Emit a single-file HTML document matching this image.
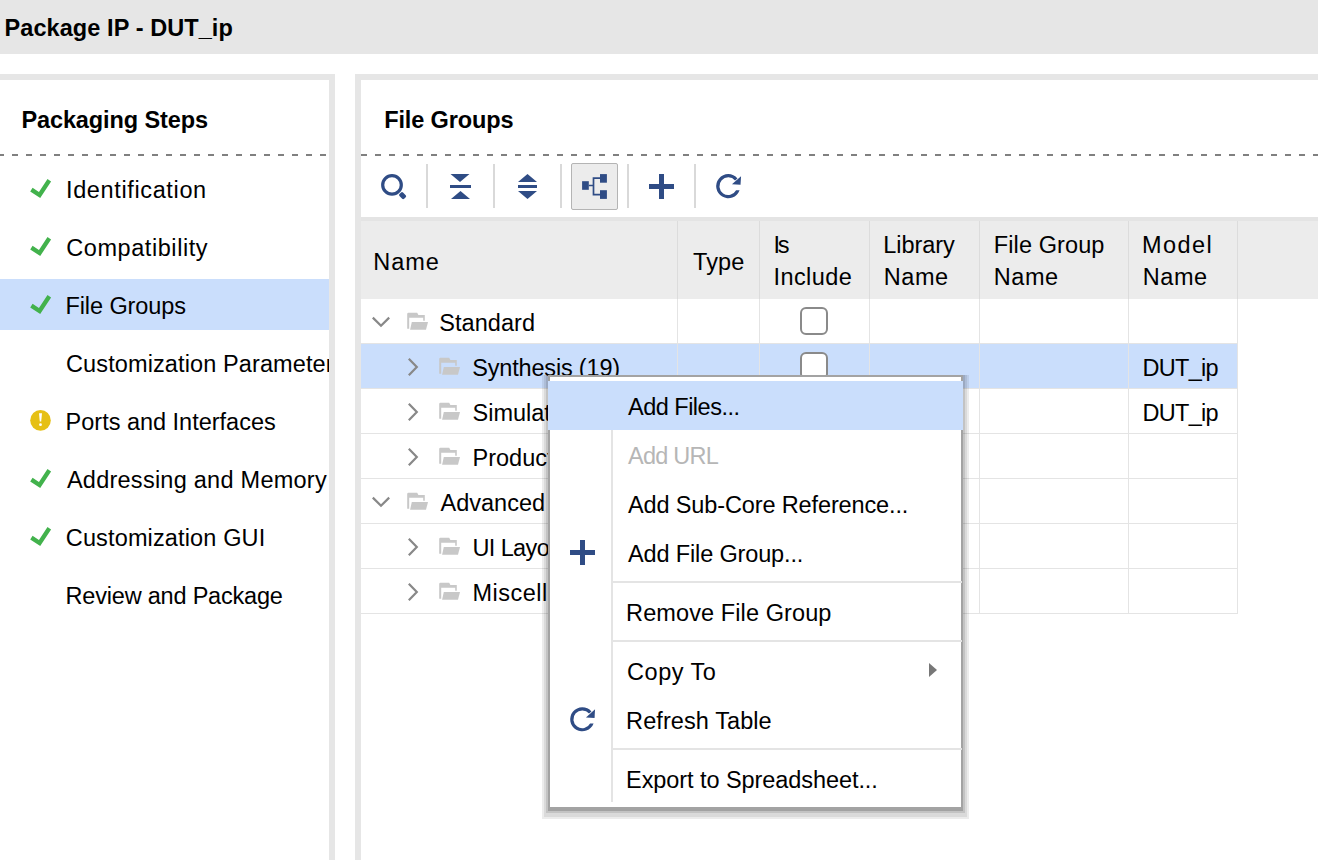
<!DOCTYPE html>
<html><head><meta charset="utf-8">
<style>
*{margin:0;padding:0;box-sizing:border-box}
html,body{width:1318px;height:860px;overflow:hidden;background:#fff;font-family:"Liberation Sans",sans-serif;color:#000}
.a{position:absolute}
.t{position:absolute;white-space:nowrap;font-size:23.5px;line-height:1}
svg{position:absolute;overflow:visible}
</style></head><body>
<div class="a" style="left:0;top:0;width:1318px;height:54px;background:#e6e6e6"></div>
<div class="t" style="left:4.5px;top:17.31px;font-weight:bold;letter-spacing:0.083px">Package IP - DUT_ip</div>
<div class="a" style="left:-10px;top:74px;width:345px;height:900px;border:6px solid #e6e6e6"></div>
<div class="a" style="left:355px;top:74px;width:1100px;height:900px;border:6px solid #e6e6e6;border-right:none"></div>
<div class="t" style="left:21.4px;top:109.41px;font-weight:bold;letter-spacing:-0.107px">Packaging Steps</div>
<div class="a" style="left:-2px;top:154px;width:331px;height:2px;background-image:repeating-linear-gradient(90deg,#808080 0 6px,transparent 6px 14px)"></div>
<div class="a" style="left:0;top:279px;width:329px;height:51px;background:#cadefc"></div>
<div class="a" style="left:0;top:160px;width:329px;height:500px;overflow:hidden">
<svg style="left:0;top:0" width="1" height="1"><path d="M31.4 29.6 L39.6 35.0 L49.3 20.2" fill="none" stroke="#42b24c" stroke-width="4.3"/></svg>
<div class="t" style="left:66.0px;top:18.91px;letter-spacing:0.631px">Identification</div>
<svg style="left:0;top:0" width="1" height="1"><path d="M31.4 87.6 L39.6 93.0 L49.3 78.2" fill="none" stroke="#42b24c" stroke-width="4.3"/></svg>
<div class="t" style="left:66.2px;top:76.91px;letter-spacing:0.575px">Compatibility</div>
<svg style="left:0;top:0" width="1" height="1"><path d="M31.4 145.6 L39.6 151.0 L49.3 136.2" fill="none" stroke="#42b24c" stroke-width="4.3"/></svg>
<div class="t" style="left:65.4px;top:134.91px;letter-spacing:-0.08px">File Groups</div>
<div class="t" style="left:66.0px;top:192.91px;letter-spacing:0.113px">Customization Parameters</div>
<svg style="left:0;top:0" width="1" height="1"><circle cx="40.5" cy="260.4" r="10.3" fill="#e6c014"/><path d="M39 253.3 L42 253.3 L41.2 261.4 L39.8 261.4Z" fill="#fff"/><circle cx="40.5" cy="264.7" r="1.4" fill="#fff"/></svg>
<div class="t" style="left:65.6px;top:250.91px;letter-spacing:-0.011px">Ports and Interfaces</div>
<svg style="left:0;top:0" width="1" height="1"><path d="M31.4 319.6 L39.6 325.0 L49.3 310.2" fill="none" stroke="#42b24c" stroke-width="4.3"/></svg>
<div class="t" style="left:66.9px;top:308.91px;letter-spacing:0.255px">Addressing and Memory</div>
<svg style="left:0;top:0" width="1" height="1"><path d="M31.4 377.6 L39.6 383.0 L49.3 368.2" fill="none" stroke="#42b24c" stroke-width="4.3"/></svg>
<div class="t" style="left:65.8px;top:366.91px;letter-spacing:0.138px">Customization GUI</div>
<div class="t" style="left:65.6px;top:424.91px;letter-spacing:-0.206px">Review and Package</div>
</div>
<div class="t" style="left:384.2px;top:108.91px;font-weight:bold;letter-spacing:-0.12px">File Groups</div>
<div class="a" style="left:361px;top:154px;width:957px;height:2px;background-image:repeating-linear-gradient(90deg,#808080 0 6px,transparent 6px 14px)"></div>
<div class="a" style="left:426px;top:164px;width:2px;height:44px;background:#d9d9d9"></div>
<div class="a" style="left:493px;top:164px;width:2px;height:44px;background:#d9d9d9"></div>
<div class="a" style="left:560px;top:164px;width:2px;height:44px;background:#d9d9d9"></div>
<div class="a" style="left:627px;top:164px;width:2px;height:44px;background:#d9d9d9"></div>
<div class="a" style="left:694px;top:164px;width:2px;height:44px;background:#d9d9d9"></div>
<div class="a" style="left:571px;top:163px;width:47px;height:47px;background:#ececec;border:1px solid #b4b4b4;border-radius:2px"></div>
<svg style="left:0;top:0" width="1" height="1"><circle cx="392" cy="184.9" r="9.3" fill="none" stroke="#2f4c85" stroke-width="3.2"/><rect x="-2.5" y="-3.3" width="5" height="6.6" rx="1.4" fill="#2f4c85" transform="translate(402.6 195.6) rotate(-45)"/></svg>
<svg style="left:0;top:0" width="1" height="1"><path d="M450.5 174 L469.5 174 L460 182Z M451 199 L470 199 L460.5 191Z" fill="#2f4c85"/><rect x="450" y="185" width="21" height="3" fill="#2f4c85"/></svg>
<svg style="left:0;top:0" width="1" height="1"><path d="M518 182 L537 182 L527.5 174Z M518 191 L537 191 L527.5 199Z" fill="#2f4c85"/><rect x="518" y="185" width="19" height="3" fill="#2f4c85"/></svg>
<svg style="left:0;top:0" width="1" height="1"><rect x="582.1" y="181.2" width="6.7" height="8.6" fill="#2f4c85"/><rect x="600" y="174.1" width="6.9" height="8.6" fill="#2f4c85"/><rect x="600" y="190.2" width="6.9" height="8.7" fill="#2f4c85"/><path d="M588.8 185.5 L593.5 185.5 M593.5 177.4 L593.5 195.6 M592.7 178.2 L600 178.2 M592.7 194.6 L600 194.6" stroke="#2f4c85" stroke-width="1.7" fill="none"/></svg>
<svg style="left:0;top:0" width="1" height="1"><rect x="649" y="184" width="25" height="5" fill="#2f4c85"/><rect x="659" y="174" width="5" height="25" fill="#2f4c85"/></svg>
<svg style="left:0;top:0" width="1" height="1"><path d="M736.09 190.25 L739.58 190.25 A12.05 12.05 0 1 1 737.48 178.40 L735.03 180.46 A8.85 8.85 0 1 0 736.09 190.25Z" fill="#2f4c85"/><path d="M741.05 176.15 L740.55 184.75 L731.95 184.25Z" fill="#2f4c85"/></svg>
<div class="a" style="left:361px;top:217px;width:957px;height:82px;background:#ececec;border-top:4px solid #e4e4e4"></div>
<div class="a" style="left:677px;top:221px;width:1px;height:78px;background:#dcdcdc"></div>
<div class="a" style="left:759px;top:221px;width:1px;height:78px;background:#dcdcdc"></div>
<div class="a" style="left:869px;top:221px;width:1px;height:78px;background:#dcdcdc"></div>
<div class="a" style="left:979px;top:221px;width:1px;height:78px;background:#dcdcdc"></div>
<div class="a" style="left:1128px;top:221px;width:1px;height:78px;background:#dcdcdc"></div>
<div class="a" style="left:1237px;top:221px;width:1px;height:78px;background:#dcdcdc"></div>
<div class="t" style="left:373.3px;top:250.91px;letter-spacing:0.933px">Name</div>
<div class="t" style="left:693.0px;top:250.91px;letter-spacing:0.133px">Type</div>
<div class="t" style="left:773.5px;top:233.91px;letter-spacing:-2.4px">Is</div>
<div class="t" style="left:773.5px;top:265.91px;letter-spacing:0.417px">Include</div>
<div class="t" style="left:883.3px;top:233.91px;letter-spacing:-0.067px">Library</div>
<div class="t" style="left:883.8px;top:265.91px;letter-spacing:0.533px">Name</div>
<div class="t" style="left:993.8px;top:233.91px;letter-spacing:0.1px">File Group</div>
<div class="t" style="left:993.8px;top:265.91px;letter-spacing:0.533px">Name</div>
<div class="t" style="left:1142.1px;top:233.91px;letter-spacing:1.425px">Model</div>
<div class="t" style="left:1142.8px;top:265.91px;letter-spacing:0.533px">Name</div>
<div class="a" style="left:361px;top:299px;width:877px;height:45px;background:#fff;border-bottom:1px solid #e4e4e4"></div>
<div class="a" style="left:677px;top:299px;width:1px;height:45px;background:#e4e4e4"></div>
<div class="a" style="left:759px;top:299px;width:1px;height:45px;background:#e4e4e4"></div>
<div class="a" style="left:869px;top:299px;width:1px;height:45px;background:#e4e4e4"></div>
<div class="a" style="left:979px;top:299px;width:1px;height:45px;background:#e4e4e4"></div>
<div class="a" style="left:1128px;top:299px;width:1px;height:45px;background:#e4e4e4"></div>
<div class="a" style="left:1237px;top:299px;width:1px;height:45px;background:#e4e4e4"></div>
<svg style="left:0;top:0" width="1" height="1"><path d="M372.8 317.6 L381 325.8 L389.2 317.6" fill="none" stroke="#888" stroke-width="2.2"/></svg>
<svg style="left:0;top:0" width="1" height="1"><path d="M407.2 313.9 Q407.2 312.7 408.4 312.7 L417.2 312.7 L418.4 315.09999999999997 L424.8 315.09999999999997 L424.8 320.7 L423.2 320.7 L423.2 317.7 L409.2 317.7 L409.2 328.7 L407.2 328.7Z" fill="#c8c8c8"/><path d="M411.8 322.0 L428.0 322.0 L426.0 329.7 L410.09999999999997 329.7Z" fill="#c8c8c8"/></svg>
<div class="t" style="left:439.3px;top:311.91px;letter-spacing:0.057px">Standard</div>
<div class="a" style="left:800px;top:307px;width:28px;height:28px;border:2px solid #8a8a8a;border-radius:6px;background:#fff"></div>
<div class="a" style="left:361px;top:344px;width:877px;height:45px;background:#cadefc;border-bottom:1px solid #e4e4e4"></div>
<div class="a" style="left:677px;top:344px;width:1px;height:45px;background:#e4e4e4"></div>
<div class="a" style="left:759px;top:344px;width:1px;height:45px;background:#e4e4e4"></div>
<div class="a" style="left:869px;top:344px;width:1px;height:45px;background:#e4e4e4"></div>
<div class="a" style="left:979px;top:344px;width:1px;height:45px;background:#e4e4e4"></div>
<div class="a" style="left:1128px;top:344px;width:1px;height:45px;background:#e4e4e4"></div>
<div class="a" style="left:1237px;top:344px;width:1px;height:45px;background:#e4e4e4"></div>
<svg style="left:0;top:0" width="1" height="1"><path d="M408.8 358.8 L416.8 367.0 L408.8 375.2" fill="none" stroke="#888" stroke-width="2.2"/></svg>
<svg style="left:0;top:0" width="1" height="1"><path d="M439.2 358.9 Q439.2 357.7 440.4 357.7 L449.2 357.7 L450.4 360.09999999999997 L456.8 360.09999999999997 L456.8 365.7 L455.2 365.7 L455.2 362.7 L441.2 362.7 L441.2 373.7 L439.2 373.7Z" fill="#c8c8c8"/><path d="M443.8 367.0 L460.0 367.0 L458.0 374.7 L442.09999999999997 374.7Z" fill="#c8c8c8"/></svg>
<div class="t" style="left:472.3px;top:356.91px;letter-spacing:-0.185px">Synthesis (19)</div>
<div class="a" style="left:800px;top:352px;width:28px;height:28px;border:2px solid #8a8a8a;border-radius:6px;background:#fff"></div>
<div class="t" style="left:1142.6px;top:356.91px;letter-spacing:-0.74px">DUT_ip</div>
<div class="a" style="left:361px;top:389px;width:877px;height:45px;background:#fff;border-bottom:1px solid #e4e4e4"></div>
<div class="a" style="left:677px;top:389px;width:1px;height:45px;background:#e4e4e4"></div>
<div class="a" style="left:759px;top:389px;width:1px;height:45px;background:#e4e4e4"></div>
<div class="a" style="left:869px;top:389px;width:1px;height:45px;background:#e4e4e4"></div>
<div class="a" style="left:979px;top:389px;width:1px;height:45px;background:#e4e4e4"></div>
<div class="a" style="left:1128px;top:389px;width:1px;height:45px;background:#e4e4e4"></div>
<div class="a" style="left:1237px;top:389px;width:1px;height:45px;background:#e4e4e4"></div>
<svg style="left:0;top:0" width="1" height="1"><path d="M408.8 403.8 L416.8 412.0 L408.8 420.2" fill="none" stroke="#888" stroke-width="2.2"/></svg>
<svg style="left:0;top:0" width="1" height="1"><path d="M439.2 403.9 Q439.2 402.7 440.4 402.7 L449.2 402.7 L450.4 405.09999999999997 L456.8 405.09999999999997 L456.8 410.7 L455.2 410.7 L455.2 407.7 L441.2 407.7 L441.2 418.7 L439.2 418.7Z" fill="#c8c8c8"/><path d="M443.8 412.0 L460.0 412.0 L458.0 419.7 L442.09999999999997 419.7Z" fill="#c8c8c8"/></svg>
<div class="t" style="left:472.5px;top:401.91px">Simulation</div>
<div class="t" style="left:1142.6px;top:401.91px;letter-spacing:-0.74px">DUT_ip</div>
<div class="a" style="left:361px;top:434px;width:877px;height:45px;background:#fff;border-bottom:1px solid #e4e4e4"></div>
<div class="a" style="left:677px;top:434px;width:1px;height:45px;background:#e4e4e4"></div>
<div class="a" style="left:759px;top:434px;width:1px;height:45px;background:#e4e4e4"></div>
<div class="a" style="left:869px;top:434px;width:1px;height:45px;background:#e4e4e4"></div>
<div class="a" style="left:979px;top:434px;width:1px;height:45px;background:#e4e4e4"></div>
<div class="a" style="left:1128px;top:434px;width:1px;height:45px;background:#e4e4e4"></div>
<div class="a" style="left:1237px;top:434px;width:1px;height:45px;background:#e4e4e4"></div>
<svg style="left:0;top:0" width="1" height="1"><path d="M408.8 448.8 L416.8 457.0 L408.8 465.2" fill="none" stroke="#888" stroke-width="2.2"/></svg>
<svg style="left:0;top:0" width="1" height="1"><path d="M439.2 448.9 Q439.2 447.7 440.4 447.7 L449.2 447.7 L450.4 450.09999999999997 L456.8 450.09999999999997 L456.8 455.7 L455.2 455.7 L455.2 452.7 L441.2 452.7 L441.2 463.7 L439.2 463.7Z" fill="#c8c8c8"/><path d="M443.8 457.0 L460.0 457.0 L458.0 464.7 L442.09999999999997 464.7Z" fill="#c8c8c8"/></svg>
<div class="t" style="left:472.5px;top:446.91px">Production</div>
<div class="a" style="left:361px;top:479px;width:877px;height:45px;background:#fff;border-bottom:1px solid #e4e4e4"></div>
<div class="a" style="left:677px;top:479px;width:1px;height:45px;background:#e4e4e4"></div>
<div class="a" style="left:759px;top:479px;width:1px;height:45px;background:#e4e4e4"></div>
<div class="a" style="left:869px;top:479px;width:1px;height:45px;background:#e4e4e4"></div>
<div class="a" style="left:979px;top:479px;width:1px;height:45px;background:#e4e4e4"></div>
<div class="a" style="left:1128px;top:479px;width:1px;height:45px;background:#e4e4e4"></div>
<div class="a" style="left:1237px;top:479px;width:1px;height:45px;background:#e4e4e4"></div>
<svg style="left:0;top:0" width="1" height="1"><path d="M372.8 497.6 L381 505.8 L389.2 497.6" fill="none" stroke="#888" stroke-width="2.2"/></svg>
<svg style="left:0;top:0" width="1" height="1"><path d="M407.2 493.9 Q407.2 492.7 408.4 492.7 L417.2 492.7 L418.4 495.09999999999997 L424.8 495.09999999999997 L424.8 500.7 L423.2 500.7 L423.2 497.7 L409.2 497.7 L409.2 508.7 L407.2 508.7Z" fill="#c8c8c8"/><path d="M411.8 502.0 L428.0 502.0 L426.0 509.7 L410.09999999999997 509.7Z" fill="#c8c8c8"/></svg>
<div class="t" style="left:440.5px;top:491.91px">Advanced</div>
<div class="a" style="left:361px;top:524px;width:877px;height:45px;background:#fff;border-bottom:1px solid #e4e4e4"></div>
<div class="a" style="left:677px;top:524px;width:1px;height:45px;background:#e4e4e4"></div>
<div class="a" style="left:759px;top:524px;width:1px;height:45px;background:#e4e4e4"></div>
<div class="a" style="left:869px;top:524px;width:1px;height:45px;background:#e4e4e4"></div>
<div class="a" style="left:979px;top:524px;width:1px;height:45px;background:#e4e4e4"></div>
<div class="a" style="left:1128px;top:524px;width:1px;height:45px;background:#e4e4e4"></div>
<div class="a" style="left:1237px;top:524px;width:1px;height:45px;background:#e4e4e4"></div>
<svg style="left:0;top:0" width="1" height="1"><path d="M408.8 538.8 L416.8 547.0 L408.8 555.2" fill="none" stroke="#888" stroke-width="2.2"/></svg>
<svg style="left:0;top:0" width="1" height="1"><path d="M439.2 538.9000000000001 Q439.2 537.7 440.4 537.7 L449.2 537.7 L450.4 540.1 L456.8 540.1 L456.8 545.7 L455.2 545.7 L455.2 542.7 L441.2 542.7 L441.2 553.7 L439.2 553.7Z" fill="#c8c8c8"/><path d="M443.8 547.0 L460.0 547.0 L458.0 554.7 L442.09999999999997 554.7Z" fill="#c8c8c8"/></svg>
<div class="t" style="left:472.5px;top:536.91px;letter-spacing:-0.625px">UI Layout</div>
<div class="a" style="left:361px;top:569px;width:877px;height:45px;background:#fff;border-bottom:1px solid #e4e4e4"></div>
<div class="a" style="left:677px;top:569px;width:1px;height:45px;background:#e4e4e4"></div>
<div class="a" style="left:759px;top:569px;width:1px;height:45px;background:#e4e4e4"></div>
<div class="a" style="left:869px;top:569px;width:1px;height:45px;background:#e4e4e4"></div>
<div class="a" style="left:979px;top:569px;width:1px;height:45px;background:#e4e4e4"></div>
<div class="a" style="left:1128px;top:569px;width:1px;height:45px;background:#e4e4e4"></div>
<div class="a" style="left:1237px;top:569px;width:1px;height:45px;background:#e4e4e4"></div>
<svg style="left:0;top:0" width="1" height="1"><path d="M408.8 583.8 L416.8 592.0 L408.8 600.2" fill="none" stroke="#888" stroke-width="2.2"/></svg>
<svg style="left:0;top:0" width="1" height="1"><path d="M439.2 583.9000000000001 Q439.2 582.7 440.4 582.7 L449.2 582.7 L450.4 585.1 L456.8 585.1 L456.8 590.7 L455.2 590.7 L455.2 587.7 L441.2 587.7 L441.2 598.7 L439.2 598.7Z" fill="#c8c8c8"/><path d="M443.8 592.0 L460.0 592.0 L458.0 599.7 L442.09999999999997 599.7Z" fill="#c8c8c8"/></svg>
<div class="t" style="left:472.5px;top:581.91px;letter-spacing:0.5px">Miscellaneous</div>
<div class="a" style="left:548px;top:375px;width:415px;height:434px;background:#fff;border:2px solid #a3a3a3;box-shadow:0 2px 0 0 rgba(0,0,0,.17),0 2px 0 2px rgba(0,0,0,.10),0 4px 0 4px rgba(0,0,0,.075),0 4px 0 6px rgba(0,0,0,.075);clip-path:inset(0 -10px -14px -10px)"></div>
<div class="a" style="left:611px;top:430px;width:2px;height:372px;background:#e4e4e4"></div>
<div class="a" style="left:548px;top:381px;width:415px;height:49px;background:#cadefc"></div>
<div class="t" style="left:628.0px;top:395.51px;letter-spacing:-0.509px">Add Files...</div>
<div class="t" style="left:628.0px;top:444.51px;color:#b6b6b6;letter-spacing:-0.767px">Add URL</div>
<div class="t" style="left:628.0px;top:493.51px;letter-spacing:-0.129px">Add Sub-Core Reference...</div>
<div class="t" style="left:628.0px;top:542.51px;letter-spacing:-0.144px">Add File Group...</div>
<div class="t" style="left:626.1px;top:601.51px;letter-spacing:0.1px">Remove File Group</div>
<div class="t" style="left:627.1px;top:660.51px;letter-spacing:0.5px">Copy To</div>
<div class="t" style="left:626.1px;top:709.51px;letter-spacing:0.083px">Refresh Table</div>
<div class="t" style="left:626.1px;top:768.51px;letter-spacing:-0.074px">Export to Spreadsheet...</div>
<div class="a" style="left:612px;top:581px;width:350px;height:2px;background:#e4e4e4"></div>
<div class="a" style="left:612px;top:640px;width:350px;height:2px;background:#e4e4e4"></div>
<div class="a" style="left:612px;top:748px;width:350px;height:2px;background:#e4e4e4"></div>
<svg style="left:0;top:0" width="1" height="1"><rect x="570" y="550" width="25" height="5" fill="#2f4c85"/><rect x="580" y="540" width="5" height="25" fill="#2f4c85"/></svg>
<svg style="left:0;top:0" width="1" height="1"><path d="M590.09 723.40 L593.58 723.40 A12.05 12.05 0 1 1 591.48 711.55 L589.03 713.61 A8.85 8.85 0 1 0 590.09 723.40Z" fill="#2f4c85"/><path d="M595.05 709.30 L594.55 717.90 L585.95 717.40Z" fill="#2f4c85"/></svg>
<svg style="left:0;top:0" width="1" height="1"><path d="M929 663 L937 670 L929 677Z" fill="#777"/></svg>
</body></html>
